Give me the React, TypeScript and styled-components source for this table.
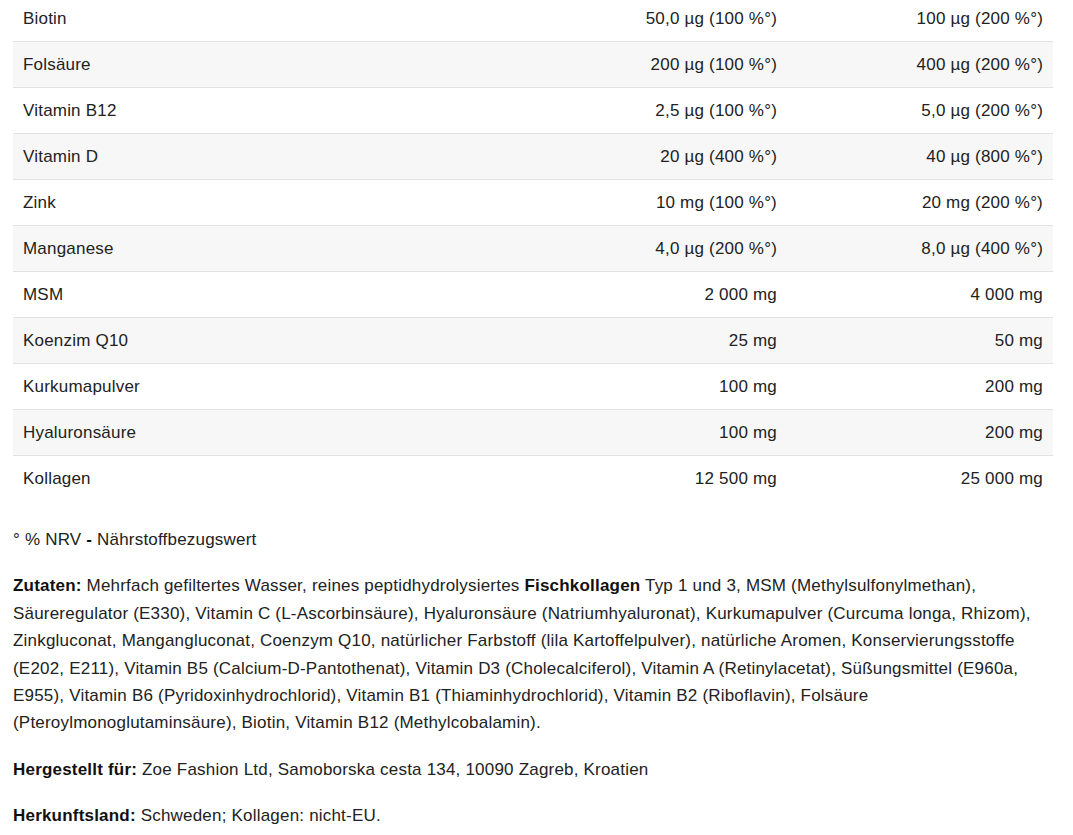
import React from 'react'
import styled, { createGlobalStyle } from 'styled-components';

const GlobalStyle = createGlobalStyle`
    body {
        margin: 0;
        background: #fff;
        font-family: "Liberation Sans", Arial, sans-serif;
        color: #222;
    }
`

const rows = [
    ['Biotin', '50,0 µg (100 %°)', '100 µg (200 %°)'],
    ['Folsäure', '200 µg (100 %°)', '400 µg (200 %°)'],
    ['Vitamin B12', '2,5 µg (100 %°)', '5,0 µg (200 %°)'],
    ['Vitamin D', '20 µg (400 %°)', '40 µg (800 %°)'],
    ['Zink', '10 mg (100 %°)', '20 mg (200 %°)'],
    ['Manganese', '4,0 µg (200 %°)', '8,0 µg (400 %°)'],
    ['MSM', '2 000 mg', '4 000 mg'],
    ['Koenzim Q10', '25 mg', '50 mg'],
    ['Kurkumapulver', '100 mg', '200 mg'],
    ['Hyaluronsäure', '100 mg', '200 mg'],
    ['Kollagen', '12 500 mg', '25 000 mg'],
];

export default function App() {
    return (
        <>
            <GlobalStyle />
            <Page>
                <NutrientTable>
                    <colgroup>
                        <col style={{ width: 520 }} />
                        <col style={{ width: 254 }} />
                        <col style={{ width: 266 }} />
                    </colgroup>
                    <tbody>
                        {rows.map((r, i) => (
                            <Row key={r[0]} $shaded={i % 2 === 1} $last={i === rows.length - 1}>
                                <Cell>{r[0]}</Cell>
                                <Cell $right>{r[1]}</Cell>
                                <Cell $right>{r[2]}</Cell>
                            </Row>
                        ))}
                    </tbody>
                </NutrientTable>

                <Text>° % NRV <b>-</b> Nährstoffbezugswert</Text>

                <Text>
                    <b>Zutaten:</b> Mehrfach gefiltertes Wasser, reines peptidhydrolysiertes <b>Fischkollagen</b> Typ 1 und 3, MSM (Methylsulfonylmethan), Säureregulator (E330), Vitamin C (L-Ascorbinsäure), Hyaluronsäure (Natriumhyaluronat), Kurkumapulver (Curcuma longa, Rhizom), Zinkgluconat, Mangangluconat, Coenzym Q10, natürlicher Farbstoff (lila Kartoffelpulver), natürliche Aromen, Konservierungsstoffe (E202, E211), Vitamin B5 (Calcium-D-Pantothenat), Vitamin D3 (Cholecalciferol), Vitamin A (Retinylacetat), Süßungsmittel (E960a, E955), Vitamin B6 (Pyridoxinhydrochlorid), Vitamin B1 (Thiaminhydrochlorid), Vitamin B2 (Riboflavin), Folsäure (Pteroylmonoglutaminsäure), Biotin, Vitamin B12 (Methylcobalamin).
                </Text>

                <Text><b>Hergestellt für:</b> Zoe Fashion Ltd, Samoborska cesta 134, 10090 Zagreb, Kroatien</Text>

                <Text><b>Herkunftsland:</b> Schweden; Kollagen: nicht-EU.</Text>
            </Page>
        </>
    )
}

const Page = styled.div`
    width: 1040px;
    padding: 0 0 0 13px;
    margin-top: -5px;
    font-size: 17px;
    letter-spacing: 0.2px;
    line-height: 27.4px;
`

const NutrientTable = styled.table`
    width: 1040px;
    border-collapse: collapse;
    table-layout: fixed;
    border-top: 1px solid #e2e2e2;
    margin-bottom: 25px;
`

const Row = styled.tr<{ $shaded?: boolean; $last?: boolean }>`
    background: ${p => p.$shaded ? '#f7f7f7' : '#fff'};
    border-bottom: ${p => p.$last ? 'none' : '1px solid #e2e2e2'};
`

const Cell = styled.td<{ $right?: boolean }>`
    height: 45px;
    padding: 0 10px;
    text-align: ${p => p.$right ? 'right' : 'left'};
    vertical-align: middle;
    line-height: 20px;
`

const Text = styled.p`
    margin: 0 0 19px;
    b {
        font-weight: bold;
        color: #111;
    }
`
